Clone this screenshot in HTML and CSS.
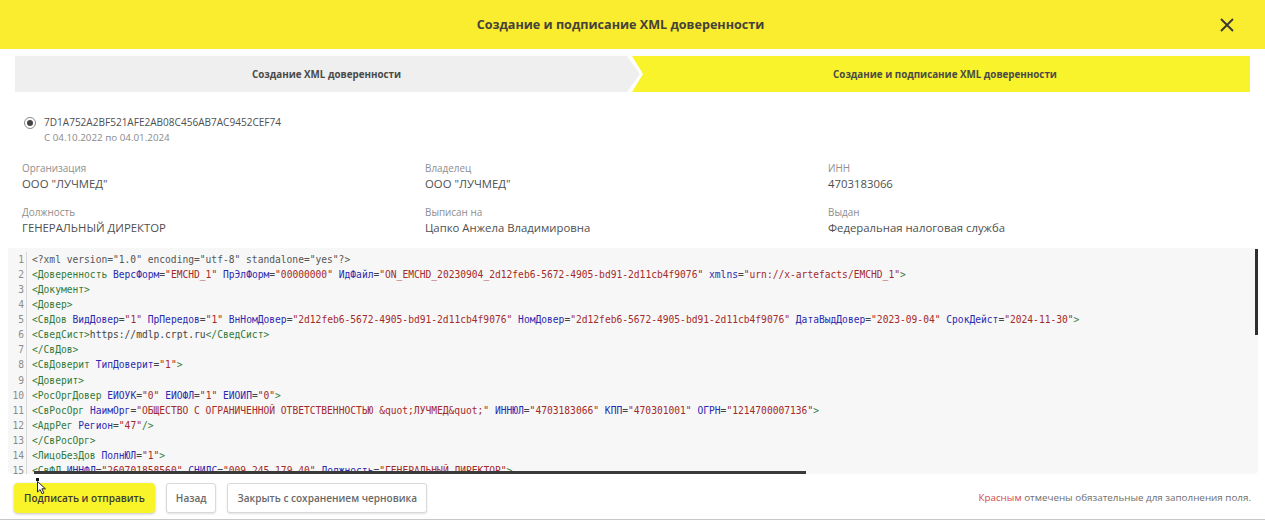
FILE: index.html
```html
<!DOCTYPE html>
<html lang="ru">
<head>
<meta charset="utf-8">
<title>Создание и подписание XML доверенности</title>
<link rel="stylesheet" href="styles.css">
</head>
<body>
<div class="modal">
  <header class="head">
    <h1 class="title">Создание и подписание XML доверенности</h1>
    <svg class="close" width="14" height="14" viewBox="0 0 14 14"><path d="M1 1l12 12M13 1L1 13" stroke="#3a3a32" stroke-width="1.9" fill="none"/></svg>
  </header>
  <nav class="steps">
    <div class="step step-done">Создание XML доверенности</div>
    <div class="step step-active">Создание и подписание XML доверенности</div>
  </nav>
  <section class="cert">
    <span class="radio"><span class="radio-dot"></span></span>
    <div>
      <div class="cert-id">7D1A752A2BF521AFE2AB08C456AB7AC9452CEF74</div>
      <div class="cert-date">С 04.10.2022 по 04.01.2024</div>
    </div>
  </section>
  <section class="info">
    <div class="field"><div class="label">Организация</div><div class="value">ООО "ЛУЧМЕД"</div></div>
    <div class="field"><div class="label">Владелец</div><div class="value">ООО "ЛУЧМЕД"</div></div>
    <div class="field"><div class="label">ИНН</div><div class="value">4703183066</div></div>
    <div class="field"><div class="label">Должность</div><div class="value">ГЕНЕРАЛЬНЫЙ ДИРЕКТОР</div></div>
    <div class="field"><div class="label">Выписан на</div><div class="value">Цапко Анжела Владимировна</div></div>
    <div class="field"><div class="label">Выдан</div><div class="value">Федеральная налоговая служба</div></div>
  </section>
  <section class="code">
    <div class="line"><span class="n">1</span><span class="c"><i class="p">&lt;?xml version="1.0" encoding="utf-8" standalone="yes"?&gt;</i></span></div>
    <div class="line"><span class="n">2</span><span class="c"><i class="t">&lt;Доверенность</i> <i class="a">ВерсФорм</i>=<i class="s">"EMCHD_1"</i> <i class="a">ПрЭлФорм</i>=<i class="s">"00000000"</i> <i class="a">ИдФайл</i>=<i class="s">"ON_EMCHD_20230904_2d12feb6-5672-4905-bd91-2d11cb4f9076"</i> <i class="a">xmlns</i>=<i class="s">"urn://x-artefacts/EMCHD_1"</i><i class="t">&gt;</i></span></div>
    <div class="line"><span class="n">3</span><span class="c"><i class="t">&lt;Документ&gt;</i></span></div>
    <div class="line"><span class="n">4</span><span class="c"><i class="t">&lt;Довер&gt;</i></span></div>
    <div class="line"><span class="n">5</span><span class="c"><i class="t">&lt;СвДов</i> <i class="a">ВидДовер</i>=<i class="s">"1"</i> <i class="a">ПрПередов</i>=<i class="s">"1"</i> <i class="a">ВнНомДовер</i>=<i class="s">"2d12feb6-5672-4905-bd91-2d11cb4f9076"</i> <i class="a">НомДовер</i>=<i class="s">"2d12feb6-5672-4905-bd91-2d11cb4f9076"</i> <i class="a">ДатаВыдДовер</i>=<i class="s">"2023-09-04"</i> <i class="a">СрокДейст</i>=<i class="s">"2024-11-30"</i><i class="t">&gt;</i></span></div>
    <div class="line"><span class="n">6</span><span class="c"><i class="t">&lt;СведСист&gt;</i>https://mdlp.crpt.ru<i class="t">&lt;/СведСист&gt;</i></span></div>
    <div class="line"><span class="n">7</span><span class="c"><i class="t">&lt;/СвДов&gt;</i></span></div>
    <div class="line"><span class="n">8</span><span class="c"><i class="t">&lt;СвДоверит</i> <i class="a">ТипДоверит</i>=<i class="s">"1"</i><i class="t">&gt;</i></span></div>
    <div class="line"><span class="n">9</span><span class="c"><i class="t">&lt;Доверит&gt;</i></span></div>
    <div class="line"><span class="n">10</span><span class="c"><i class="t">&lt;РосОргДовер</i> <i class="a">ЕИОУК</i>=<i class="s">"0"</i> <i class="a">ЕИОФЛ</i>=<i class="s">"1"</i> <i class="a">ЕИОИП</i>=<i class="s">"0"</i><i class="t">&gt;</i></span></div>
    <div class="line"><span class="n">11</span><span class="c"><i class="t">&lt;СвРосОрг</i> <i class="a">НаимОрг</i>=<i class="s">"ОБЩЕСТВО С ОГРАНИЧЕННОЙ ОТВЕТСТВЕННОСТЬЮ &amp;quot;ЛУЧМЕД&amp;quot;"</i> <i class="a">ИННЮЛ</i>=<i class="s">"4703183066"</i> <i class="a">КПП</i>=<i class="s">"470301001"</i> <i class="a">ОГРН</i>=<i class="s">"1214700007136"</i><i class="t">&gt;</i></span></div>
    <div class="line"><span class="n">12</span><span class="c"><i class="t">&lt;АдрРег</i> <i class="a">Регион</i>=<i class="s">"47"</i><i class="t">/&gt;</i></span></div>
    <div class="line"><span class="n">13</span><span class="c"><i class="t">&lt;/СвРосОрг&gt;</i></span></div>
    <div class="line"><span class="n">14</span><span class="c"><i class="t">&lt;ЛицоБезДов</i> <i class="a">ПолнЮЛ</i>=<i class="s">"1"</i><i class="t">&gt;</i></span></div>
    <div class="line"><span class="n">15</span><span class="c"><i class="t">&lt;СвФЛ</i> <i class="a">ИННФЛ</i>=<i class="s">"260701858560"</i> <i class="a">СНИЛС</i>=<i class="s">"009-245-179 40"</i> <i class="a">Должность</i>=<i class="s">"ГЕНЕРАЛЬНЫЙ ДИРЕКТОР"</i><i class="t">&gt;</i></span></div>
    <div class="hbar"></div>
    <div class="vbar"></div>
  </section>
  <footer class="foot">
    <button class="btn btn-primary">Подписать и отправить</button>
    <button class="btn">Назад</button>
    <button class="btn">Закрыть с сохранением черновика</button>
    <div class="note"><span class="red">Красным</span> отмечены обязательные для заполнения поля.</div>
    <svg class="cursor" width="12" height="19" viewBox="0 0 12 19"><rect x="0" y="0" width="3" height="3" fill="#111"/><path d="M1.5 3.5v10.5l2.6-2.4 2 4.2 1.8-.9-2-4.1h3.5z" fill="#fff" stroke="#222" stroke-width="1"/></svg>
  </footer>
</div>
</body>
</html>
```
FILE: styles.css
```css
* { box-sizing: border-box; }
html, body { margin: 0; padding: 0; }
body { width: 1265px; height: 520px; overflow: hidden; background: #fff; font-family: "Open Sans", sans-serif; color: #555; }
.modal { height: 520px; display: flex; flex-direction: column; border-bottom: 1px solid #c8c8c8; }
.head { height: 49px; flex: none; background: #faec2e; display: flex; align-items: center; justify-content: center; position: relative; padding-right: 24px; }
.title { margin: 0; font-size: 12.6px; font-weight: 700; color: #44423a; }
.close { position: absolute; right: 31px; top: 18px; }
.steps { display: flex; height: 36px; margin: 7px 15px 0 15px; flex: none; font-size: 9.8px; font-weight: 700; color: #4a4a48; }
.step { display: flex; align-items: center; justify-content: center; }
.step-done { flex: none; width: 625px; margin-right: -8px; background: #efefef; clip-path: polygon(0 0, 612px 0, 100% 50%, 612px 100%, 0 100%); padding-right: 2px; position: relative; z-index: 1; }
.step-active { flex: 1; background: #f8f32a; clip-path: polygon(0 0, 100% 0, 100% 100%, 0 100%, 11px 50%); padding-left: 8px; }
.cert { display: flex; gap: 8px; margin: 23px 0 0 24px; flex: none; }
.radio { width: 12px; height: 12px; margin-top: 2px; border: 1px solid #8a8a8a; border-radius: 50%; display: flex; align-items: center; justify-content: center; flex: none; }
.radio-dot { width: 6px; height: 6px; border-radius: 50%; background: #444; }
.cert-id { font-size: 10.06px; line-height: 15px; color: #4f4f4f; }
.cert-date { font-size: 9.8px; line-height: 15px; color: #8a8a8a; }
.info { display: grid; grid-template-columns: 403px 403px 1fr; margin: 16px 0 0 22px; row-gap: 13px; flex: none; }
.label { font-size: 9.9px; line-height: 15px; color: #8e8e8e; }
.value { font-size: 11.35px; line-height: 16px; color: #4f4f4f; }
.code { position: relative; flex: 1; margin: 12px 7px 0 8px; padding-top: 4px; background: #f7f7f7; overflow: hidden; border-radius: 0 0 4px 4px; font-family: "DejaVu Sans Mono", monospace; font-size: 9.615px; }
.line { display: flex; height: 15.07px; line-height: 15px; white-space: nowrap; }
.n { width: 19px; flex: none; text-align: right; padding-right: 2px; color: #8c8c8c; border-right: 1px solid #d8d8d8; }
.c { padding-left: 5px; color: #444; }
.c i { font-style: normal; }
.p { color: #555; }
.t { color: #2f7a3a; }
.a { color: #2a2ab0; }
.s { color: #a32a2a; }
.hbar { position: absolute; left: 26px; bottom: 0; width: 772px; height: 3px; background: #3a3a3a; }
.vbar { position: absolute; right: 0; top: 1px; width: 3px; height: 86px; background: #2f2f2f; }
.foot { position: relative; flex: none; height: 45px; display: flex; align-items: flex-start; padding: 9px 14px 0; gap: 11px; }
.btn { height: 30px; padding: 0 9px; border: 1px solid #d9d9d9; border-radius: 3px; background: #fff; font-family: "Open Sans", sans-serif; font-size: 10.05px; font-weight: 600; color: #6a6a6a; box-shadow: 0 1px 2px rgba(0,0,0,.12); }
.btn-primary { border: none; padding: 0 10px; background: #f9f32a; color: #3a3a32; border-radius: 4px; box-shadow: 0 1px 3px rgba(0,0,0,.25); }
.note { margin-left: auto; padding-top: 7px; font-size: 9.83px; color: #6e6e6e; }
.red { color: #d9484f; }
.cursor { position: absolute; left: 36px; top: 4px; }
```
